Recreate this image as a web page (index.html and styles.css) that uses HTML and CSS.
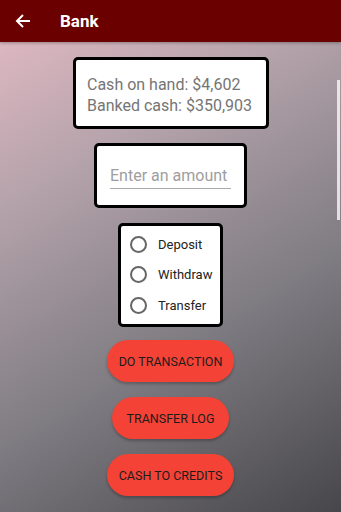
FILE: index.html
```html
<!DOCTYPE html>
<html lang="en">
<head>
    <meta charset="UTF-8">
    <meta name="viewport" content="width=device-width, initial-scale=1.0">
    <title>Bank</title>
    <link rel="stylesheet" href="styles.css">
</head>
<body>
    <div id="app">
        <div class="app-bar">
            <svg class="back" width="16" height="16" viewBox="0 0 16 16">
                <path d="M15 8H2M8 2L2 8l6 6" fill="none" stroke="#fff" stroke-width="2"/>
            </svg>
            <span class="title">Bank</span>
        </div>
        <div class="content">
            <div class="card balance">
                <div>Cash on hand: $4,602</div>
                <div>Banked cash: $350,903</div>
            </div>
            <div class="card amount">
                <input type="text" class="amount-input" placeholder="Enter an amount">
            </div>
            <div class="card options">
                <label class="option"><span class="radio"></span>Deposit</label>
                <label class="option"><span class="radio"></span>Withdraw</label>
                <label class="option"><span class="radio"></span>Transfer</label>
            </div>
            <button class="pill">DO TRANSACTION</button>
            <button class="pill">TRANSFER LOG</button>
            <button class="pill">CASH TO CREDITS</button>
        </div>
        <div class="scrollbar"></div>
    </div>
</body>
</html>
```

FILE: styles.css
```css
body {
    margin: 0;
    padding: 0;
    font-family: Roboto, "Noto Sans", sans-serif;
}
#app {
    position: relative;
    width: 341px;
    height: 512px;
    overflow: hidden;
    background: linear-gradient(150deg, #e6bcc6 0%, #b4a2aa 30%, #7c7a80 65%, #47464a 100%);
}
.app-bar {
    height: 42px;
    background-color: #6b0000;
    display: flex;
    align-items: center;
    box-shadow: 0 1px 3px rgba(0, 0, 0, 0.3);
}
.back {
    margin-left: 15px;
}
.title {
    margin-left: 29px;
    color: white;
    font-size: 17px;
    font-weight: 700;
}
.content {
    display: flex;
    flex-direction: column;
    align-items: center;
    padding-top: 15px;
}
.card {
    background-color: white;
    border: 3px solid black;
    border-radius: 5px;
    box-sizing: border-box;
}
.balance {
    width: 196px;
    height: 72px;
    padding: 14px 0 0 11px;
    color: #757575;
    font-size: 16px;
    line-height: 21px;
    margin-left: 1px;
}
.amount {
    margin-top: 14px;
    width: 153px;
    height: 65px;
    padding: 18px 0 0 13px;
}
.amount-input {
    width: 121px;
    border: none;
    border-bottom: 1px solid #aaa;
    font-family: Roboto, sans-serif;
    font-size: 16px;
    padding: 2px 0 3px 0;
    outline: none;
}
.amount-input::placeholder {
    color: #9e9e9e;
}
.options {
    margin-top: 15px;
    width: 105px;
    height: 104px;
    padding: 3px 0 0 8px;
    display: flex;
    flex-direction: column;
}
.option {
    display: flex;
    align-items: center;
    height: 30.5px;
    font-size: 13px;
    color: #222;
}
.radio {
    width: 13px;
    height: 13px;
    border: 2px solid #666;
    border-radius: 50%;
    margin-right: 11px;
    margin-left: 1px;
}
.pill {
    margin-top: 15px;
    height: 42px;
    padding: 0 12px;
    min-width: 117px;
    border: none;
    border-radius: 21px;
    background-color: #f44336;
    color: #1c1c1c;
    font-family: Roboto, sans-serif;
    font-size: 12.5px;
    font-weight: 400;
    box-shadow: 0 2px 3px rgba(0, 0, 0, 0.25);
}
.pill:first-of-type {
    margin-top: 13px;
}
.scrollbar {
    position: absolute;
    right: 1px;
    top: 80px;
    width: 3px;
    height: 140px;
    background-color: rgba(255, 255, 255, 0.75);
}
```
